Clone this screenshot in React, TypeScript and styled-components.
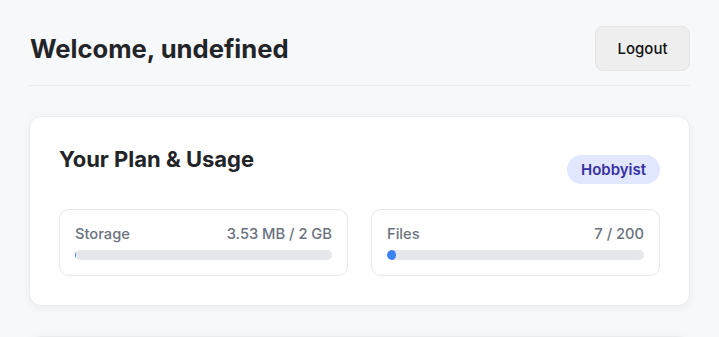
import styled, { createGlobalStyle } from 'styled-components'

const GlobalStyle = createGlobalStyle`
  body {
    margin: 0;
    background: #f7f8fa;
    font-family: Inter, "Noto Sans", sans-serif;
    color: #222428;
  }
`

const usage = [
  { label: 'Storage', value: '3.53 MB / 2 GB', percent: 0.17 },
  { label: 'Files', value: '7 / 200', percent: 3.5 },
]

function App() {
  return (
    <>
      <GlobalStyle />
      <Page>
        <Header>
          <h1>Welcome, undefined</h1>
          <LogoutButton>Logout</LogoutButton>
        </Header>
        <Card>
          <CardHead>
            <h2>Your Plan &amp; Usage</h2>
            <Badge>Hobbyist</Badge>
          </CardHead>
          <UsageGrid>
            {usage.map((u) => (
              <UsageBox key={u.label}>
                <UsageRow>
                  <span>{u.label}</span>
                  <span>{u.value}</span>
                </UsageRow>
                <Track>
                  <Fill style={{ width: `${u.percent}%` }} />
                </Track>
              </UsageBox>
            ))}
          </UsageGrid>
        </Card>
        <Card />
      </Page>
    </>
  )
}

const Page = styled.div`
  display: flex;
  flex-direction: column;
  gap: 30px;
  padding: 26px 29px 30px 29px;
`

const Header = styled.div`
  display: flex;
  align-items: center;
  justify-content: space-between;
  padding-bottom: 14px;
  border-bottom: 1px solid #e9eaed;

  h1 {
    margin: 0 0 0 1px;
    font-size: 25.6px;
    font-weight: 700;
    color: #222428;
  }
`

const LogoutButton = styled.button`
  width: 95px;
  height: 45px;
  border: 1px solid #e6e6e6;
  border-radius: 8px;
  background: #eeeeee;
  font-family: Inter, sans-serif;
  font-size: 15px;
  font-weight: 500;
  color: #111;
  cursor: pointer;
`

const Card = styled.div`
  box-sizing: border-box;
  min-height: 100px;
  padding: 30px 29px 29px;
  border: 1px solid #ebecef;
  border-radius: 12px;
  background: #fff;
  box-shadow: 0 2px 8px rgba(0, 0, 0, 0.05);
`

const CardHead = styled.div`
  display: flex;
  justify-content: space-between;
  align-items: flex-start;
  margin-bottom: 25px;

  h2 {
    margin: 0;
    font-size: 22px;
    font-weight: 700;
    line-height: 24px;
  }
`

const Badge = styled.span`
  margin-top: 8px;
  padding: 5px 14px;
  border-radius: 999px;
  background: #e0e7ff;
  color: #3730a3;
  font-size: 15px;
  font-weight: 600;
  line-height: 19px;
`

const UsageGrid = styled.div`
  display: grid;
  grid-template-columns: 1fr 1fr;
  gap: 23px;
`

const UsageBox = styled.div`
  padding: 14px 15px 15px;
  border: 1px solid #e5e7eb;
  border-radius: 10px;
`

const UsageRow = styled.div`
  display: flex;
  justify-content: space-between;
  margin-bottom: 6px;
  font-size: 14.7px;
  font-weight: 500;
  line-height: 20px;
  color: #6b7280;
`

const Track = styled.div`
  height: 10px;
  border-radius: 999px;
  background: #e5e7eb;
  overflow: hidden;
`

const Fill = styled.div`
  height: 100%;
  border-radius: 999px;
  background: #3b82f6;
`

export default App
